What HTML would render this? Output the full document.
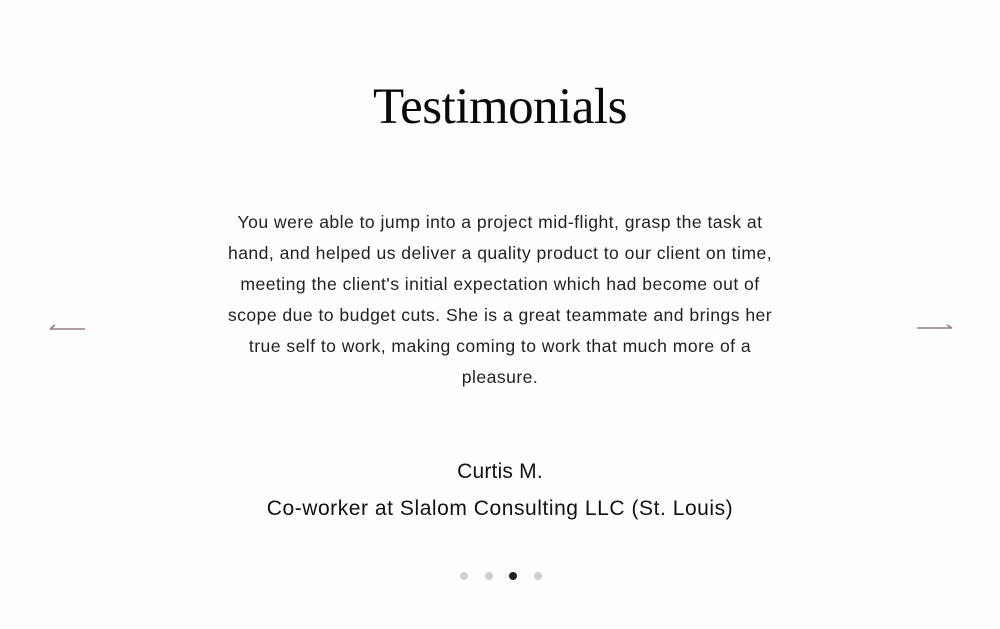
<!DOCTYPE html>
<html><head><style>
html,body{margin:0;padding:0;width:1000px;height:629px;background:#fefefe;overflow:hidden;font-family:"Liberation Sans",sans-serif;color:#111;position:relative}
h1{position:absolute;top:77px;left:0;width:1000px;text-align:center;margin:0;font:400 51px/60px "Liberation Serif",serif;color:#0a0a0a;letter-spacing:-0.5px}
.q{position:absolute;top:207px;left:150px;width:700px;text-align:center;font-size:17.6px;line-height:31px;color:#222;letter-spacing:0.45px;white-space:nowrap}
.n{position:absolute;top:460px;width:1000px;text-align:center;font-size:21px;color:#111;letter-spacing:0.2px}
.r{position:absolute;top:497px;width:1000px;text-align:center;font-size:21px;color:#111;letter-spacing:0.55px}
.dots{position:absolute;top:572px;left:460px}
.dots span{position:absolute;width:8px;height:8px;border-radius:50%;background:#cfcfcf}
svg{position:absolute}
</style></head><body>
<h1>Testimonials</h1>
<div class="q">You were able to jump into a project mid-flight, grasp the task at<br>hand, and helped us deliver a quality product to our client on time,<br>meeting the client's initial expectation which had become out of<br>scope due to budget cuts. She is a great teammate and brings her<br>true self to work, making coming to work that much more of a<br>pleasure.</div>
<div class="n">Curtis M.</div>
<div class="r">Co-worker at Slalom Consulting LLC (St. Louis)</div>
<div class="dots"><span style="left:0"></span><span style="left:25px"></span><span style="left:49px;background:#222"></span><span style="left:74px"></span></div>
<svg style="left:45px;top:320px" width="45" height="15"><path d="M5 9H40M5 9L10 5" stroke="#9a7a84" stroke-width="1.6" fill="none"/></svg>
<svg style="left:912px;top:320px" width="45" height="15"><path d="M5 8H40M40 8L35 5" stroke="#9a7a84" stroke-width="1.6" fill="none"/></svg>
</body></html>
